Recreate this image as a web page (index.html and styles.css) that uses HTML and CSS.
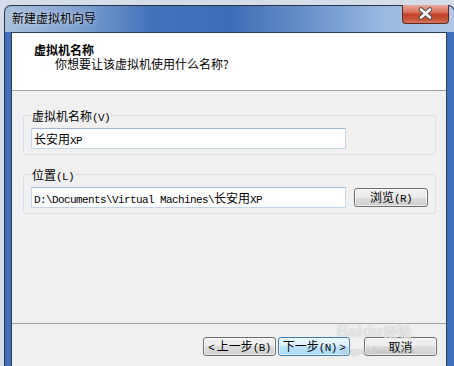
FILE: index.html
```html
<!DOCTYPE html>
<html lang="zh-CN">
<head>
    <meta charset="UTF-8">
    <title>新建虚拟机向导</title>
    <link rel="stylesheet" href="styles.css">
</head>
<body>
    <div class="window">
        <div class="titlebar">
            <span class="title">新建虚拟机向导</span>
            <div class="close">
                <svg width="47" height="19" viewBox="0 0 47 19">
                    <path d="M19 5.5 L28 13.5 M28 5.5 L19 13.5" stroke="#4a4a4a" stroke-width="4.5" stroke-linecap="round"/>
                    <path d="M19 5.5 L28 13.5 M28 5.5 L19 13.5" stroke="#ffffff" stroke-width="2.6" stroke-linecap="round"/>
                </svg>
            </div>
        </div>

        <div class="client">
            <div class="header">
                <div class="header-title">虚拟机名称</div>
                <div class="header-sub">你想要让该虚拟机使用什么名称?</div>
            </div>

            <div class="main">
                <div class="group">
                    <div class="group-label">虚拟机名称<span class="a">(V)</span></div>
                    <div class="textbox">长安用<span class="a">XP</span></div>
                </div>

                <div class="group group-location">
                    <div class="group-label">位置<span class="a">(L)</span></div>
                    <div class="row">
                        <div class="textbox"><span class="a">D:\Documents\Virtual Machines\</span>长安用<span class="a">XP</span></div>
                        <button class="btn btn-browse">浏览<span class="a">(R)</span></button>
                    </div>
                </div>
            </div>

            <div class="footer">
                <button class="btn btn-back"><span class="a">&lt;</span> 上一步<span class="a">(B)</span></button>
                <button class="btn btn-next btn-default">下一步<span class="a">(N)</span> <span class="a">&gt;</span></button>
                <button class="btn btn-cancel">取消</button>
            </div>

            <!-- baidu watermark over the screenshot -->
            <div class="watermark">
                <div class="wm-logo">Bai<span class="wm-du">du</span><span class="wm-cn">经验</span></div>
                <div class="wm-url">jingyan.baidu.com</div>
            </div>
        </div>
    </div>
</body>
</html>
```

FILE: styles.css
```css
html, body {
    margin: 0;
    height: 100%;
    overflow: hidden;
}
body {
    background-color: #d4dde8;
    font-family: "Noto Sans CJK SC", sans-serif;
    font-size: 12px;
    color: #000;
}
.a {
    font-family: "Liberation Mono", monospace;
    font-size: 11px;
    letter-spacing: -0.6px;
}
.window {
    position: relative;
    margin: 5px 0 0 4px;
    width: 449px;
    border: 1px solid #24364f;
    border-bottom: none;
    border-radius: 7px 7px 0 0;
    background-color: #4171b9;
}
.titlebar {
    display: flex;
    align-items: flex-start;
    height: 26px;
    padding-left: 7px;
    border-radius: 6px 6px 0 0;
    background: linear-gradient(90deg, #a9c0dc 0%, #86a6d2 14%, #4574bb 32%, #3e6db5 50%, #6b92cc 68%, #9ab8e0 84%, #b2c8e6 100%);
}
.title {
    margin-top: 4px;
    line-height: 16px;
    color: #000;
    text-shadow: 0 0 4px rgba(255, 255, 255, 0.7);
}
.close {
    margin-left: auto;
    margin-right: 5px;
    margin-top: -1px;
    width: 47px;
    height: 19px;
    box-sizing: border-box;
    border: 1px solid #5a2a22;
    border-top: none;
    border-radius: 0 0 4px 4px;
    background: linear-gradient(#e7a898 0%, #d8735c 40%, #c2412a 52%, #c9543a 80%, #d9775c 100%);
}
.close svg {
    display: block;
    margin: -1px 0 0 -1px;
}
.client {
    position: relative;
    margin: 0 7px 0 6px;
    border: 1px solid #2b3e5b;
    border-bottom: none;
    background-color: #f0f0f0;
    height: 333px;
}
.header {
    height: 58px;
    box-sizing: border-box;
    padding: 10px 0 0 22px;
    background-color: #fff;
    border-bottom: 1px solid #a0a0a0;
}
.header-title {
    font-weight: bold;
    line-height: 14px;
}
.header-sub {
    line-height: 14px;
    padding-left: 21px;
}
.main {
    height: 232px;
    box-sizing: border-box;
    padding: 24px 10px 0 11px;
}
.group {
    border: 1px solid #d5dfe5;
    border-radius: 3px;
    padding: 0 7px 5px 7px;
}
.group-location {
    margin-top: 19px;
}
.group-label {
    width: fit-content;
    margin-top: -8px;
    padding: 0 1px;
    line-height: 16px;
    background-color: #f0f0f0;
}
.textbox {
    margin-top: 2px;
    width: 315px;
    height: 21px;
    box-sizing: border-box;
    padding: 0 2px;
    line-height: 19px;
    background-color: #fff;
    border: 1px solid #c5d5e6;
    border-top-color: #a3b8cf;
    white-space: nowrap;
}
.row {
    display: flex;
    align-items: center;
    gap: 8px;
}
.btn {
    height: 19px;
    box-sizing: border-box;
    padding: 0;
    font-family: inherit;
    font-size: 12px;
    line-height: 16px;
    color: #000;
    border: 1px solid #707070;
    border-radius: 3px;
    background: linear-gradient(#f2f2f2 0%, #ebebeb 50%, #dddddd 50%, #cfcfcf 100%);
    box-shadow: inset 0 0 0 1px rgba(255, 255, 255, 0.6);
}
.btn-browse {
    margin-top: 2px;
    width: 74px;
}
.btn-default {
    border-color: #3c7fb1;
    background: linear-gradient(#eaf6fd 0%, #d9f0fc 50%, #bee6fd 50%, #a7d9f5 100%);
}
.footer {
    display: flex;
    justify-content: flex-end;
    padding: 13px 9px 0 0;
    border-top: 1px solid #a0a0a0;
}
.btn-back {
    width: 73px;
    margin-right: 2px;
}
.btn-next {
    width: 72px;
    margin-right: 14px;
}
.btn-cancel {
    width: 73px;
}
.watermark {
    position: absolute;
    left: 325px;
    top: 290px;
    pointer-events: none;
    color: rgba(255, 255, 255, 0.7);
    text-shadow: 0 0 1px rgba(0, 0, 0, 0.3);
}
.wm-logo {
    font-family: "Liberation Sans", sans-serif;
    font-size: 16px;
    font-weight: bold;
    line-height: 16px;
}
.wm-du {
    margin-left: 1px;
}
.wm-cn {
    font-family: "Noto Sans CJK SC", sans-serif;
    font-size: 14px;
    margin-left: 1px;
}
.wm-url {
    margin-top: 6px;
    font-family: "Liberation Sans", sans-serif;
    font-size: 9px;
    line-height: 10px;
    padding-left: 5px;
    color: rgba(255, 255, 255, 0.55);
}
```
